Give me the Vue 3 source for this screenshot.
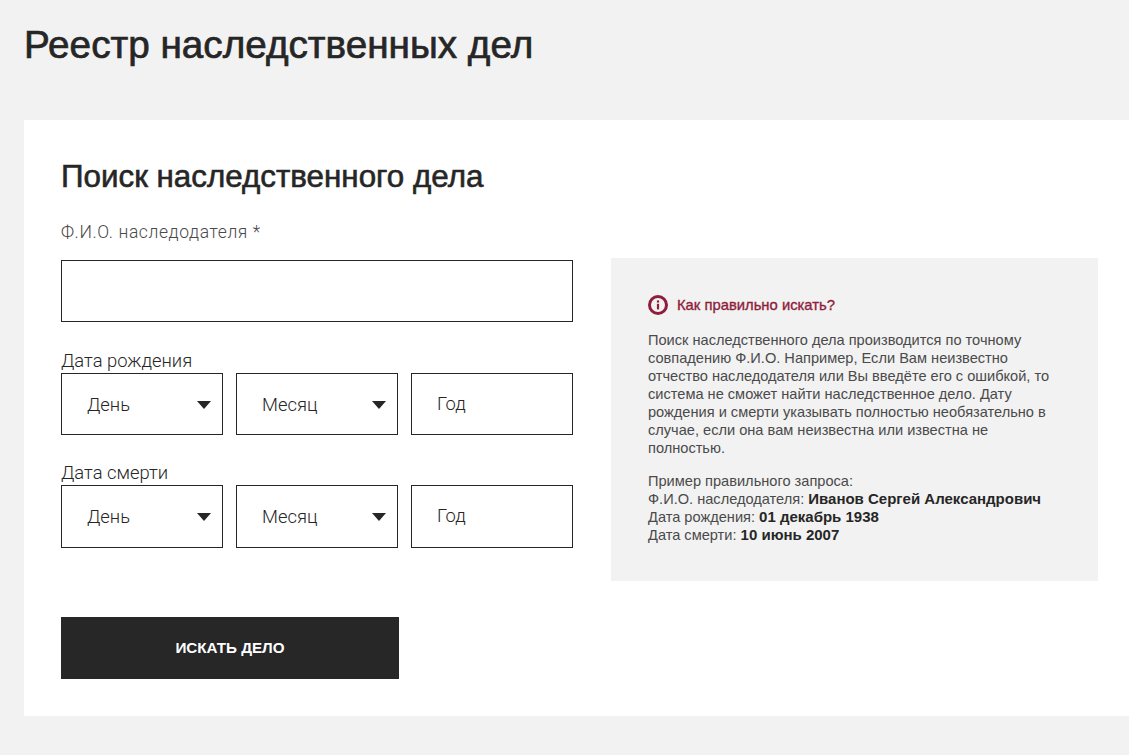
<script setup>
const dateFields = [
  { id: 'birth', label: 'Дата рождения' },
  { id: 'death', label: 'Дата смерти' }
]
</script>

<template>
  <div class="page">
    <h1 class="page-title">Реестр наследственных дел</h1>
    <section class="card">
      <h2 class="card-title">Поиск наследственного дела</h2>
      <div class="columns">
        <form class="form" @submit.prevent>
          <label class="label name-label" for="fio">Ф.И.О. наследодателя *</label>
          <input id="fio" class="field name-field" type="text" />
          <div v-for="f in dateFields" :key="f.id" class="date-group">
            <div class="label date-label">{{ f.label }}</div>
            <div class="date-row">
              <div class="select-wrap">
                <select class="field select"><option>День</option></select>
              </div>
              <div class="select-wrap">
                <select class="field select"><option>Месяц</option></select>
              </div>
              <input class="field year" type="text" placeholder="Год" />
            </div>
          </div>
        </form>
        <aside class="hint">
          <div class="hint-head">
            <svg class="hint-icon" width="20" height="20" viewBox="0 0 20 20">
              <circle cx="10" cy="10" r="8.5" fill="none" stroke="#8f1d3c" stroke-width="3" />
              <rect x="8.9" y="8.8" width="2.2" height="5.6" fill="#8f1d3c" />
              <rect x="8.9" y="5.4" width="2.2" height="2.2" fill="#8f1d3c" />
            </svg>
            <span>Как правильно искать?</span>
          </div>
          <p class="hint-text">
            Поиск наследственного дела производится по точному совпадению Ф.И.О. Например, Если Вам неизвестно
            отчество наследодателя или Вы введёте его с ошибкой, то система не сможет найти наследственное дело.
            Дату рождения и смерти указывать полностью необязательно в случае, если она вам неизвестна или
            известна не полностью.
          </p>
          <p class="hint-text example">
            Пример правильного запроса:<br />
            Ф.И.О. наследодателя: <b>Иванов Сергей Александрович</b><br />
            Дата рождения: <b>01 декабрь 1938</b><br />
            Дата смерти: <b>10 июнь 2007</b>
          </p>
        </aside>
      </div>
      <button class="submit" type="button">ИСКАТЬ ДЕЛО</button>
    </section>
  </div>
</template>

<style scoped>
.page {
  height: 755px;
  overflow: hidden;
  background: #f2f2f2;
  padding: 22px 0 0 24px;
  box-sizing: border-box;
  font-family: "Liberation Sans", Arial, sans-serif;
  color: #262626;
}
.page-title {
  margin: 0;
  font-size: 38.7px;
  line-height: 46px;
  font-weight: 400;
  -webkit-text-stroke: 0.7px #262626;
}
.card {
  margin-top: 52px;
  height: 596px;
  box-sizing: border-box;
  background: #fff;
  padding: 40px 31px 37px 37px;
}
.card-title {
  margin: 0;
  font-size: 31.35px;
  line-height: 34px;
  font-weight: 400;
  -webkit-text-stroke: 0.6px #262626;
}
.columns {
  display: grid;
  grid-template-columns: 512px 487px;
  column-gap: 38px;
  align-items: start;
}
.label {
  display: block;
  font-family: Roboto, "Liberation Sans", sans-serif;
  font-weight: 300;
  color: #262626;
}
.name-label {
  margin-top: 27px;
  font-size: 17.5px;
  line-height: 22px;
  letter-spacing: 0.6px;
  color: #4a4a4a;
}
.field {
  box-sizing: border-box;
  height: 62px;
  border: 1px solid #262626;
  border-radius: 0;
  background: #fff;
  outline: none;
  font-family: Roboto, "Liberation Sans", sans-serif;
  font-weight: 300;
  font-size: 18.4px;
  color: #262626;
}
.name-field {
  display: block;
  width: 100%;
  margin-top: 17px;
}
.date-group {
  margin-top: 27px;
}
.date-group + .date-group {
  margin-top: 26px;
}
.date-group + .date-group .field {
  height: 63px;
}
.date-label {
  font-size: 18.4px;
  line-height: 24px;
}
.date-row {
  display: grid;
  grid-template-columns: 162px 162px 162px;
  column-gap: 13px;
}
.select-wrap {
  position: relative;
}
.select-wrap::after {
  content: "";
  position: absolute;
  right: 12px;
  top: 28px;
  border-left: 7px solid transparent;
  border-right: 7px solid transparent;
  border-top: 8px solid #262626;
}
.select {
  display: block;
  width: 100%;
  padding: 0 0 0 25px;
  appearance: none;
  -webkit-appearance: none;
}
.year {
  padding: 0 25px 2px;
  width: 100%;
}
.year::placeholder {
  color: #262626;
  opacity: 1;
}
.hint {
  margin-top: 64px;
  height: 323px;
  box-sizing: border-box;
  background: #f2f2f2;
  padding: 37px 37px 0;
}
.hint-head {
  display: flex;
  align-items: center;
  gap: 9px;
  font-size: 14.8px;
  line-height: 20px;
  font-weight: 400;
  -webkit-text-stroke: 0.35px #8f1d3c;
  color: #8f1d3c;
}
.hint-icon {
  flex: none;
}
.hint-text {
  margin: 16px 0 0;
  font-size: 14.6px;
  line-height: 18px;
  color: #4a4a4a;
}
.hint-text.example {
  margin-top: 15px;
}
.hint-text b {
  font-size: 15px;
  color: #262626;
}
.submit {
  display: block;
  margin-top: 36px;
  width: 338px;
  height: 62px;
  padding: 0 0 2px;
  border: 0;
  background: #272727;
  color: #fff;
  font-family: "Liberation Sans", Arial, sans-serif;
  font-size: 15.2px;
  font-weight: 700;
}
</style>

<style>
body {
  margin: 0;
  background: #f2f2f2;
}
</style>
